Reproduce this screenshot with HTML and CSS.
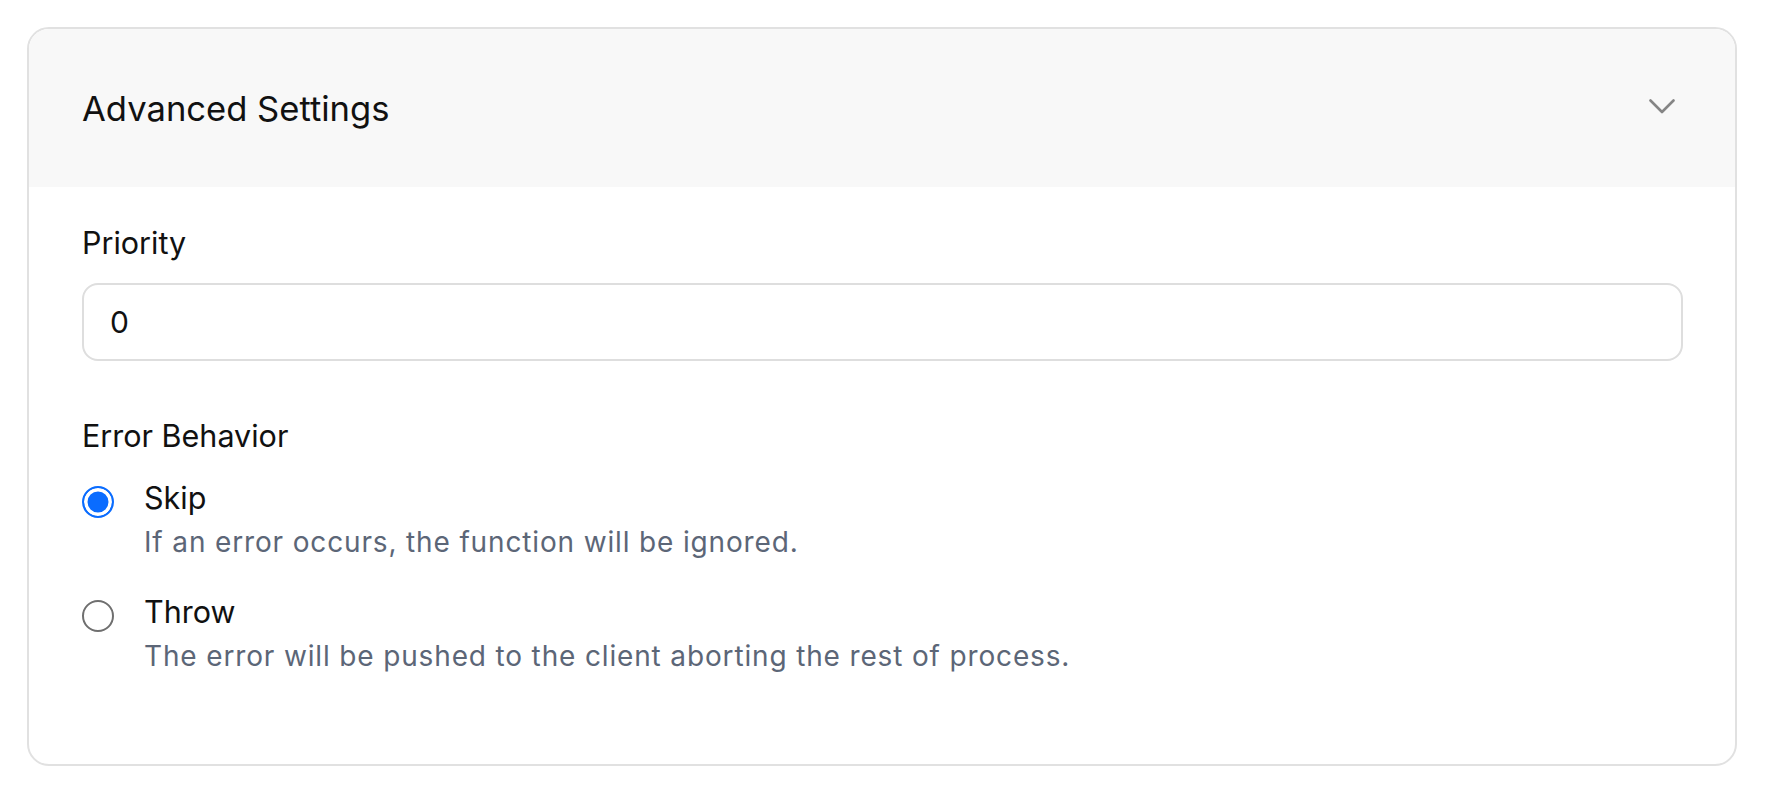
FILE: index.html
```html
<!DOCTYPE html>
<html lang="en">
<head>
<meta charset="utf-8">
<title>Advanced Settings</title>
<link rel="stylesheet" href="styles.css">
</head>
<body>
<section class="card">
  <header class="card-header">
    <h2 class="card-title">Advanced Settings</h2>
    <svg class="chevron" width="26" height="15" viewBox="0 0 26 15" aria-hidden="true">
      <polyline points="1.5,1.5 13,13 24.5,1.5" fill="none" stroke="currentColor" stroke-width="2.6" stroke-linecap="round" stroke-linejoin="round"/>
    </svg>
  </header>
  <div class="card-body">
    <div class="field">
      <div class="label">Priority</div>
      <div class="input">0</div>
    </div>
    <div class="field field-radios">
      <div class="label">Error Behavior</div>
      <div class="options">
        <div class="option">
          <span class="radio radio-checked"></span>
          <div class="option-text">
            <div class="option-title">Skip</div>
            <div class="option-desc">If an error occurs, the function will be ignored.</div>
          </div>
        </div>
        <div class="option">
          <span class="radio"></span>
          <div class="option-text">
            <div class="option-title">Throw</div>
            <div class="option-desc">The error will be pushed to the client aborting the rest of process.</div>
          </div>
        </div>
      </div>
    </div>
  </div>
</section>
</body>
</html>
```

FILE: styles.css
```css
* { box-sizing: border-box; }

html, body {
  margin: 0;
  background: #ffffff;
}

body {
  padding: 27px 41px 0 27px;
  font-family: Inter, "Noto Sans", "Liberation Sans", sans-serif;
  color: #111111;
}

.card {
  border: 2px solid #e1e1e1;
  border-radius: 22px;
  overflow: hidden;
  background: #ffffff;
}

.card-header {
  height: 158px;
  background: #f8f8f8;
  display: flex;
  align-items: center;
  justify-content: space-between;
  padding: 0 60px 0 53px;
}

.card-title {
  margin: 0;
  font-size: 34.6px;
  font-weight: 400;
  line-height: 48px;
  color: #111111;
}

.chevron {
  color: #858585;
  margin-top: -3px;
}

.card-body {
  padding: 32px 52px 88px 53px;
}

.label {
  font-size: 30.5px;
  line-height: 48px;
  color: #111111;
}

.input {
  margin-top: 16px;
  height: 78px;
  border: 2px solid #dedede;
  border-radius: 16px;
  display: flex;
  align-items: center;
  padding: 0 26px;
  font-size: 30px;
  color: #111111;
  background: #ffffff;
}

.field-radios {
  margin-top: 51px;
}

.options {
  margin-top: 14px;
  display: flex;
  flex-direction: column;
  gap: 26px;
}

.option {
  display: flex;
  align-items: flex-start;
  gap: 30px;
}

.radio {
  flex: none;
  width: 32px;
  height: 32px;
  margin-top: 12px;
  border-radius: 50%;
  border: 2px solid #6f6f6f;
  background: #ffffff;
}

.radio-checked {
  border-color: #0a6cff;
  background: #0a6cff;
  box-shadow: inset 0 0 0 3.5px #ffffff;
}

.option-title {
  font-size: 30.5px;
  line-height: 48px;
  color: #111111;
}

.option-desc {
  font-size: 28px;
  line-height: 40px;
  letter-spacing: 0.85px;
  color: #5c6677;
}
```
